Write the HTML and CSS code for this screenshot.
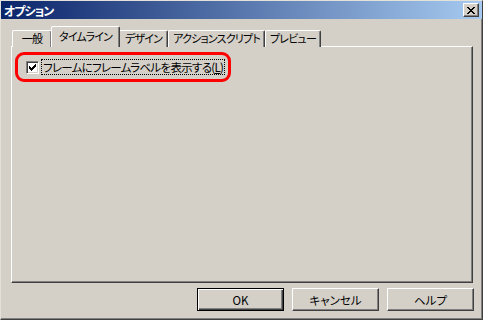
FILE: index.html
```html
<!DOCTYPE html>
<html lang="ja">
<head>
    <meta charset="UTF-8">
    <title>オプション</title>
    <link rel="stylesheet" href="styles.css">
</head>
<body>

    <div class="window">
        <div class="titlebar">
            <span class="title">オプション</span>
            <button class="close" aria-label="閉じる">
                <svg width="8" height="7" viewBox="0 0 8 7"><path d="M0 0h2v1h-2zM6 0h2v1h-2zM1 1h2v1h-2zM5 1h2v1h-2zM2 2h4v1h-4zM3 3h2v1h-2zM2 4h4v1h-4zM1 5h2v1h-2zM5 5h2v1h-2zM0 6h2v1h-2zM6 6h2v1h-2z" fill="#000"/></svg>
            </button>
        </div>

        <div class="body">
            <div class="tabs">
                <div class="tab">一般</div>
                <div class="tab active">タイムライン</div>
                <div class="tab">デザイン</div>
                <div class="tab">アクションスクリプト</div>
                <div class="tab">プレビュー</div>
            </div>

            <div class="panel">
                <div class="highlight">
                    <span class="checkbox">
                        <svg width="7" height="7" viewBox="0 0 7 7"><path d="M0 2h1v3h-1zM1 3h1v3h-1zM2 4h1v3h-1zM3 3h1v3h-1zM4 2h1v3h-1zM5 1h1v3h-1zM6 0h1v3h-1z" fill="#000"/></svg>
                    </span>
                    <label class="focus">フレームにフレームラベルを表示する(<u>L</u>)</label>
                </div>
            </div>

            <div class="buttons">
                <button class="btn default">OK</button>
                <button class="btn">キャンセル</button>
                <button class="btn">ヘルプ</button>
            </div>
        </div>
    </div>

</body>
</html>
```

FILE: styles.css
```css
body {
    margin: 0;
    background: #d4d0c8;
    font-family: "Noto Sans CJK JP", "DejaVu Sans", sans-serif;
    font-size: 11px;
    color: #000;
}
.window {
    box-sizing: border-box;
    width: 483px;
    height: 320px;
    background: #d4d0c8;
    border: 1px solid;
    border-color: #e4e1db #404040 #404040 #e4e1db;
    box-shadow: inset -1px -1px #808080;
}
.titlebar {
    display: flex;
    align-items: center;
    justify-content: space-between;
    height: 18px;
    padding: 0 3px 0 3px;
    background: linear-gradient(to right, #0a246a, #a6caf0);
}
.title {
    color: #fff;
    font-weight: bold;
    font-size: 12px;
    letter-spacing: -1px;
    font-feature-settings: "palt";
}
.close {
    display: flex;
    align-items: center;
    justify-content: center;
    box-sizing: border-box;
    width: 16px;
    height: 14px;
    padding: 0;
    background: #d4d0c8;
    border: 1px solid;
    border-color: #fff #404040 #404040 #fff;
    box-shadow: inset -1px -1px #808080;
}
.body {
    padding: 8px 8px 0 10px;
}
.tabs {
    display: flex;
    align-items: flex-end;
    height: 20px;
    padding-left: 1px;
    margin-bottom: -1px;
}
.tab {
    box-sizing: border-box;
    min-width: 40px;
    height: 17px;
    padding: 0 4px;
    text-align: center;
    white-space: nowrap;
    line-height: 15px;
    font-feature-settings: "palt";
    letter-spacing: -0.8px;
    background: #d4d0c8;
    border: 1px solid;
    border-color: #fff #404040 transparent #fff;
    border-bottom: none;
    border-radius: 2px 2px 0 0;
    box-shadow: inset -1px 0 #808080;
}
.tab.active {
    position: relative;
    z-index: 1;
    height: 21px;
    margin: 0 -1px;
    padding: 0 7px;
    line-height: 18px;
}
.tab.active + .tab {
    padding: 0 5px;
}
.panel {
    box-sizing: border-box;
    height: 237px;
    width: 462px;
    padding: 5px 3px;
    border: 1px solid;
    border-color: #fff #404040 #404040 #fff;
    box-shadow: inset -1px -1px #808080;
}
.highlight {
    display: flex;
    align-items: center;
    box-sizing: border-box;
    width: 216px;
    height: 30px;
    padding: 0 0 0 8px;
    border: 3px solid #ff0000;
    border-radius: 9px;
}
.checkbox {
    display: flex;
    align-items: center;
    justify-content: center;
    flex: none;
    box-sizing: border-box;
    width: 13px;
    height: 13px;
    background: #fff;
    border: 1px solid;
    border-color: #808080 #fff #fff #808080;
    box-shadow: inset 1px 1px #404040, inset -1px -1px #d4d0c8;
}
.focus {
    margin-left: 2px;
    padding: 0 1px;
    height: 16px;
    line-height: 14px;
    font-size: 11.5px;
    letter-spacing: -0.7px;
    white-space: nowrap;
    font-feature-settings: "palt";
    border: 1px dotted #000;
    box-sizing: border-box;
}
.focus u {
    text-decoration: underline;
}
.buttons {
    display: flex;
    justify-content: flex-end;
    gap: 8px;
    margin-top: 5px;
}
.btn {
    box-sizing: border-box;
    width: 87px;
    height: 23px;
    padding: 0;
    font-family: "Noto Sans CJK JP", "DejaVu Sans", sans-serif;
    font-size: 11.5px;
    font-feature-settings: "palt";
    background: #d4d0c8;
    border: 1px solid;
    border-color: #fff #404040 #404040 #fff;
    box-shadow: inset -1px -1px #808080;
}
.btn.default {
    border: 1px solid #000;
    box-shadow: inset 1px 1px #fff, inset -1px -1px #404040, inset -2px -2px #808080;
}
```
